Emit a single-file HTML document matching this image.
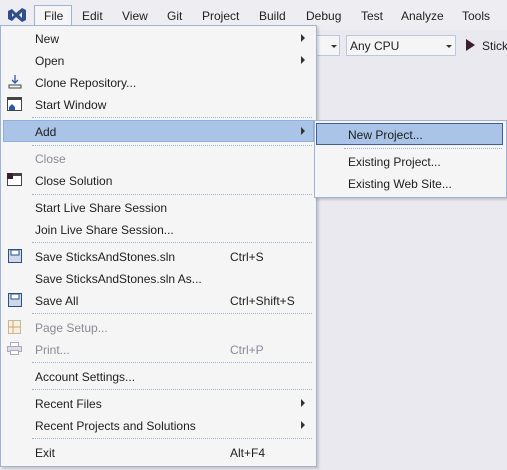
<!DOCTYPE html>
<html><head><meta charset="utf-8"><style>
*{margin:0;padding:0;box-sizing:border-box}
body{width:507px;height:470px;overflow:hidden;background:#e9e9ef;font-family:"Liberation Sans",sans-serif;font-size:12px;color:#1e1e1e;position:relative}
.a{position:absolute;white-space:nowrap}
.bar{left:0;top:0;width:507px;height:30px;background:#eeeef2}
.menu{left:0;top:25px;width:317px;height:442px;background:#f5f5f5;border:1px solid #9fb4d4;box-shadow:2px 2px 2px rgba(0,0,0,.15)}
.sub{left:314px;top:120px;width:193px;height:78px;background:#f5f5f5;border:1px solid #9fb4d4;box-shadow:2px 2px 2px rgba(0,0,0,.15)}
.sep{height:0;border-top:1px dotted #9fb4d4;left:32px;width:280px}
.t{left:35px}
.k{left:230px}
.dis{color:#8a8a99}
.arr{left:301px;width:0;height:0;border-top:4px solid transparent;border-bottom:4px solid transparent;border-left:4px solid #333}
.hl{background:#a9c4e6;border:1px solid #8fb0dc}
</style></head><body>
<div class="a bar"></div>
<svg class="a" style="left:8px;top:8px" width="18" height="14" viewBox="0 0 18 14"><path d="M0 3 L4 1 L8 5 L14 0 L18 2 L18 12 L14 14 L8 9 L4 13 L0 11Z" fill="#2f4f8a"/><path d="M4 5 L6 7 L4 9Z M14 4 L11 7 L14 10Z" fill="#eeeef2"/></svg>
<div class="a" style="left:34px;top:5px;width:38px;height:21px;border:1px solid #9fb4d4;border-bottom:none;background:#f5f5f5"></div>
<div class="a" style="left:44px;top:9px">File</div>
<div class="a" style="left:82px;top:9px">Edit</div>
<div class="a" style="left:122px;top:9px">View</div>
<div class="a" style="left:167px;top:9px">Git</div>
<div class="a" style="left:202px;top:9px">Project</div>
<div class="a" style="left:259px;top:9px">Build</div>
<div class="a" style="left:306px;top:9px">Debug</div>
<div class="a" style="left:361px;top:9px">Test</div>
<div class="a" style="left:401px;top:9px">Analyze</div>
<div class="a" style="left:462px;top:9px">Tools</div>
<div class="a" style="left:316px;top:35px;width:24px;height:21px;border:1px solid #b8c8e0;background:#f5f5f5"></div>
<div class="a" style="left:331px;top:45px;border-left:3px solid transparent;border-right:3px solid transparent;border-top:3px solid #333"></div>
<div class="a" style="left:346px;top:35px;width:110px;height:21px;border:1px solid #b8c8e0;background:#f5f5f5"></div>
<div class="a" style="left:350px;top:39px">Any CPU</div>
<div class="a" style="left:446px;top:45px;border-left:3px solid transparent;border-right:3px solid transparent;border-top:3px solid #333"></div>
<div class="a" style="left:466px;top:39px;border-top:6px solid transparent;border-bottom:6px solid transparent;border-left:9px solid #3a1f2b"></div>
<div class="a" style="left:482px;top:39px">Stick</div>

<div class="a menu"></div>
<div class="a t" style="top:32px">New</div><div class="a arr" style="top:34px"></div>
<div class="a t" style="top:54px">Open</div><div class="a arr" style="top:56px"></div>
<svg class="a" style="left:8px;top:75px" width="14" height="14"><path d="M7 0v8M4 5l3 3 3-3" stroke="#2b5aa0" fill="none" stroke-width="1.3"/><rect x="1" y="10" width="12" height="3" fill="none" stroke="#444"/></svg>
<div class="a t" style="top:76px">Clone Repository...</div>
<svg class="a" style="left:7px;top:97px" width="15" height="14"><rect x="0.5" y="0.5" width="14" height="13" fill="#fff" stroke="#444"/><rect x="1" y="1" width="13" height="2" fill="#444"/><path d="M2 10l3-3 3 3v3H2z" fill="#2b5aa0"/></svg>
<div class="a t" style="top:98px">Start Window</div>
<div class="a sep" style="top:117px"></div>
<div class="a hl" style="left:3px;top:120px;width:311px;height:22px"></div>
<div class="a t" style="top:125px">Add</div><div class="a arr" style="top:127px"></div>
<div class="a sep" style="top:145px"></div>
<div class="a t dis" style="top:152px">Close</div>
<svg class="a" style="left:7px;top:173px" width="15" height="13"><rect x="0.5" y="0.5" width="14" height="12" fill="#fff" stroke="#444"/><rect x="0" y="0" width="6" height="6" fill="#3a1f2b"/><rect x="6" y="1" width="8" height="2" fill="#444"/></svg>
<div class="a t" style="top:174px">Close Solution</div>
<div class="a sep" style="top:194px"></div>
<div class="a t" style="top:201px">Start Live Share Session</div>
<div class="a t" style="top:223px">Join Live Share Session...</div>
<div class="a sep" style="top:242px"></div>
<svg class="a" style="left:8px;top:249px" width="14" height="14"><rect x="0.5" y="0.5" width="13" height="13" fill="#cfd8e8" stroke="#2b4f86"/><rect x="3" y="1" width="8" height="5" fill="#fff" stroke="#2b4f86"/></svg>
<div class="a t" style="top:250px">Save SticksAndStones.sln</div>
<div class="a k" style="top:250px">Ctrl+S</div>
<div class="a t" style="top:272px">Save SticksAndStones.sln As...</div>
<svg class="a" style="left:8px;top:293px" width="14" height="14"><rect x="0.5" y="0.5" width="13" height="13" fill="#cfd8e8" stroke="#2b4f86"/><rect x="3" y="1" width="8" height="5" fill="#fff" stroke="#2b4f86"/></svg>
<div class="a t" style="top:294px">Save All</div>
<div class="a k" style="top:294px">Ctrl+Shift+S</div>
<div class="a sep" style="top:313px"></div>
<svg class="a" style="left:8px;top:320px" width="13" height="14"><rect x="0.5" y="0.5" width="12" height="13" fill="#f3f0e6" stroke="#c8b890"/><path d="M5 1v12M1 7h11" stroke="#e0a060"/></svg>
<div class="a t dis" style="top:321px">Page Setup...</div>
<svg class="a" style="left:7px;top:342px" width="15" height="13"><rect x="3.5" y="0.5" width="8" height="4" fill="#fff" stroke="#aab"/><rect x="0.5" y="4.5" width="14" height="5" fill="#dde" stroke="#aab"/><rect x="3.5" y="8.5" width="8" height="4" fill="#fff" stroke="#aab"/></svg>
<div class="a t dis" style="top:343px">Print...</div>
<div class="a k dis" style="top:343px">Ctrl+P</div>
<div class="a sep" style="top:362px"></div>
<div class="a t" style="top:370px">Account Settings...</div>
<div class="a sep" style="top:389px"></div>
<div class="a t" style="top:397px">Recent Files</div><div class="a arr" style="top:399px"></div>
<div class="a t" style="top:419px">Recent Projects and Solutions</div><div class="a arr" style="top:421px"></div>
<div class="a sep" style="top:438px"></div>
<div class="a t" style="top:446px">Exit</div>
<div class="a k" style="top:446px">Alt+F4</div>

<div class="a sub"></div>
<div class="a hl" style="left:316px;top:123px;width:187px;height:22px;border-color:#3d5f96"></div>
<div class="a" style="left:348px;top:128px">New Project...</div>
<div class="a sep" style="left:344px;width:158px;top:148px"></div>
<div class="a" style="left:348px;top:155px">Existing Project...</div>
<div class="a" style="left:348px;top:177px">Existing Web Site...</div>
</body></html>
